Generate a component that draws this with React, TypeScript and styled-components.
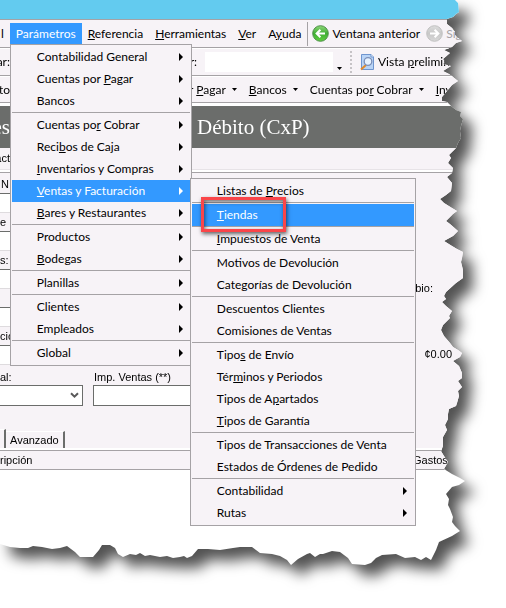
import React from "react";
import styled, { createGlobalStyle, css } from "styled-components";

const color = {
  face: "#f7f3f7",
  line: "#a5a2a5",
  dark: "#6b6d6b",
  title: "#63cbef",
  hot: "#3399ff",
  ink: "#000000",
};

const GlobalStyle = createGlobalStyle`
  * { box-sizing: border-box; }
  body { margin: 0; background: #ffffff; overflow-x: hidden; }
  button, input, select {
    font: inherit;
    color: inherit;
    margin: 0;
    padding: 0;
    border: 0;
    border-radius: 0;
    background: none;
    white-space: nowrap;
  }
  ul { list-style: none; margin: 0; padding: 0; }
`;

/* Torn paper outline. Right edge: [x inset from the right side, y]. */
const rightEdge: [number, number][] = [
  [51, 0], [48, 3], [47, 12], [50, 14], [53, 17], [59, 19], [59, 24], [54, 28], [51, 32], [51, 35],
  [49, 37], [44, 41], [50, 43], [54, 47], [62, 50], [56, 53], [63, 59], [61, 62], [63, 64], [55, 66],
  [63, 71], [57, 74], [53, 77], [48, 81], [54, 85], [59, 91], [64, 97], [64, 101], [59, 102], [55, 106],
  [50, 110], [45, 112], [46, 116], [43, 119], [45, 126], [46, 131], [45, 138], [48, 143], [50, 148], [53, 151],
  [57, 155], [55, 158], [58, 163], [53, 168], [54, 173], [59, 177], [54, 183], [55, 191], [60, 195], [66, 199],
  [62, 203], [54, 208], [49, 211], [53, 214], [60, 221], [56, 224], [48, 231], [53, 236], [62, 241], [54, 246],
  [49, 249], [43, 252], [44, 258], [45, 262], [43, 270], [43, 278], [50, 283], [60, 292], [62, 296], [60, 299],
  [64, 302], [60, 306], [54, 311], [57, 316], [56, 318], [63, 325], [65, 330], [62, 336], [56, 343], [53, 347],
  [48, 350], [44, 353], [46, 357], [53, 361], [47, 366], [44, 373], [44, 378], [48, 381], [46, 384], [44, 387],
  [48, 391], [47, 396], [49, 403], [50, 406], [57, 409], [58, 414], [58, 419], [61, 425], [59, 430], [63, 437],
  [63, 446], [65, 451], [62, 456], [58, 462], [62, 469], [54, 474], [46, 478], [41, 481], [47, 485], [54, 487],
  [60, 494], [57, 499], [58, 505], [56, 509], [53, 517], [54, 522], [51, 526], [46, 531], [54, 536], [67, 542],
  [70, 550], [75, 560],
];

/* Bottom edge, right to left: [x, y inset from the bottom]. */
const bottomEdge: [number, number][] = [
  [426, 51], [421, 48], [415, 51], [405, 50], [396, 54], [382, 53], [376, 50], [371, 45], [365, 43], [352, 44],
  [348, 50], [340, 56], [332, 57], [323, 54], [320, 54], [315, 51], [310, 55], [307, 54], [298, 49], [291, 43],
  [287, 48], [280, 52], [272, 54], [260, 55], [252, 61], [240, 61], [233, 60], [220, 58], [208, 59], [198, 59],
  [192, 52], [187, 50], [184, 52], [180, 51], [173, 50], [167, 52], [160, 51], [150, 53], [145, 52], [140, 55],
  [136, 53], [130, 54], [123, 51], [118, 54], [115, 60], [110, 63], [102, 63], [99, 58], [93, 51], [80, 51],
  [75, 56], [67, 62], [60, 60], [52, 59], [42, 61], [33, 62], [28, 60], [20, 60], [10, 61], [0, 64],
];

const outline = [
  "0 0",
  ...rightEdge.map(([x, y]) => `calc(100% - ${x}px) ${y}px`),
  ...bottomEdge.map(([x, y]) => `${x}px calc(100% - ${y}px)`),
].join(", ");

const Shadow = styled.div`
  filter: drop-shadow(10px 11px 7px rgba(0, 0, 0, 0.68));
`;

const Sheet = styled.div`
  display: flex;
  flex-direction: column;
  min-height: 100vh;
  padding-bottom: 48px;
  overflow: hidden;
  background: #ffffff;
  color: ${color.ink};
  font: 12px/16px Lato, "Noto Sans", sans-serif;
  white-space: nowrap;
  clip-path: polygon(${outline});
`;

const TitleBar = styled.div`
  height: 19px;
  background: ${color.title};
`;

const Bar = styled.div<{ $height: number }>`
  display: flex;
  align-items: center;
  height: ${(p) => p.$height}px;
  background: ${color.face};
  border-top: 1px solid #ffffff;
  border-bottom: 1px solid ${color.line};
`;

const MenuBar = styled(Bar)`
  position: relative;
  z-index: 2;
  border-top-color: ${color.line};
  padding-left: 1px;
`;

const MenuTitle = styled.button<{ $open?: boolean; $cut?: boolean }>`
  display: block;
  height: 21px;
  padding: 0 6px;
  ${(p) => p.$cut && css`padding-left: 0;`}
  ${(p) => p.$open && css`background: ${color.hot}; color: #ffffff;`}
`;

const MenuHost = styled.div`
  position: relative;
`;

const Rule = styled.span`
  width: 1px;
  height: 24px;
  margin: 0 4px 0 0;
  background: ${color.line};
`;

const IconButton = styled.button`
  display: flex;
  align-items: center;
  gap: 3px;
  height: 22px;
  margin-right: 6px;
  &:disabled { color: ${color.line}; }
`;

const Menu = styled.ul<{ $sub?: boolean }>`
  position: absolute;
  z-index: 3;
  top: ${(p) => (p.$sub ? "-2px" : "100%")};
  left: ${(p) => (p.$sub ? "100%" : "0")};
  width: ${(p) => (p.$sub ? 226 : 182)}px;
  padding: 1px;
  border: 1px solid ${color.line};
  background: ${color.face};
  color: ${color.ink};
`;

const MenuRow = styled.li<{ $rule?: boolean }>`
  position: relative;
  ${(p) => p.$rule && css`
    border-top: 1px solid ${color.line};
    padding-top: 1px;
  `}
`;

const MenuItem = styled.button<{ $hot?: boolean }>`
  display: flex;
  align-items: center;
  justify-content: space-between;
  width: 100%;
  height: 22px;
  padding: 0 7px 0 25px;
  ${(p) => p.$hot && css`background: ${color.hot}; color: #ffffff;`}
`;

const Callout = styled.span`
  position: absolute;
  z-index: 1;
  top: -6px;
  left: 9px;
  width: 85px;
  height: 35px;
  border: 3px solid #fa4549;
  box-shadow: 1px 2px 4px rgba(0, 0, 0, 0.6), inset 1px 2px 4px rgba(0, 0, 0, 0.55);
  pointer-events: none;
`;

const LeftPart = styled.div`
  display: flex;
  justify-content: space-between;
  width: 197px;
`;

/* The strip left of the open menu, where the text runs off the window. */
const Overrun = styled.span`
  display: flex;
  justify-content: flex-end;
  width: 10px;
`;

const FindBox = styled.input`
  width: 128px;
  height: 20px;
  margin-left: 8px;
  background: #ffffff;
`;

const DropButton = styled.button`
  display: flex;
  align-items: flex-end;
  height: 20px;
  margin: 0 8px 0 4px;
  padding-bottom: 2px;
`;

const Grip = styled.span`
  width: 2px;
  height: 22px;
  margin-right: 8px;
  background: repeating-linear-gradient(#c6c3c6 0 2px, transparent 2px 4px);
`;

const ToolMenu = styled.button`
  display: flex;
  align-items: center;
  gap: 6px;
  margin-right: 12px;
`;

const Banner = styled.h1`
  display: grid;
  grid-template-columns: 197px 1fr;
  align-items: center;
  height: 45px;
  margin: 0;
  border-top: 3px solid #ffffff;
  background: ${color.dark};
  color: #ffffff;
  font: 21px/24px "Liberation Serif", serif;
`;

const Small = css`
  font: 11px/14px "Liberation Sans", Arial, sans-serif;
`;

const TabStrip = styled.div`
  ${Small}
  height: 25px;
  padding-top: 3px;
  border-bottom: 1px solid ${color.line};
  background: linear-gradient(${color.face} 21px, #e7e3e7 21px 22px, #ffffff 22px);
`;

const Form = styled.form`
  ${Small}
  display: flex;
  justify-content: space-between;
  padding: 2px 0 23px;
  background: ${color.face};
`;

const Fields = styled.div`
  display: flex;
  flex-direction: column;
`;

const Pair = styled.div`
  display: grid;
  grid-template-columns: 83px 150px;
  column-gap: 10px;
`;

const Field = styled.label<{ $boxed?: boolean }>`
  display: flex;
  flex-direction: column;
  height: ${(p) => (p.$boxed ? 41 : 38)}px;
  justify-content: flex-end;
  gap: ${(p) => (p.$boxed ? 1 : 2)}px;
`;

const Box = styled.input<{ $framed?: boolean }>`
  width: 150px;
  height: 20px;
  background: #ffffff;
  border-top: 1px solid ${color.dark};
  border-bottom: 1px solid #dedbde;
  ${(p) => p.$framed && css`border: 1px solid ${color.dark}; height: 21px;`}
`;

const Picker = styled.span`
  display: grid;
  align-items: center;
  > * { grid-area: 1 / 1; }
  > svg { justify-self: end; margin-right: 4px; pointer-events: none; }
`;

const Select = styled.select`
  appearance: none;
  width: 83px;
  height: 21px;
  background: #ffffff;
  border: 1px solid ${color.dark};
  border-left: 0;
`;

const Caption = styled.span`
  padding-left: 1px;
`;

const Totals = styled.div`
  display: flex;
  flex-direction: column;
  align-items: flex-end;
  gap: 52px;
  padding: 106px 54px 0 0;
`;

const Rate = styled.span`
  padding-right: 19px;
`;

const DetailTabs = styled.div`
  ${Small}
  display: flex;
  align-items: flex-end;
  height: 21px;
  background: ${color.face};
  border-bottom: 2px solid #ffffff;
`;

const DetailTab = styled.button<{ $current?: boolean }>`
  height: ${(p) => (p.$current ? 19 : 17)}px;
  padding: 0 ${(p) => (p.$current ? 2 : 4)}px;
  border-top: 1px solid #ffffff;
  border-right: 2px solid ${color.dark};
`;

const Grid = styled.table`
  ${Small}
  width: 100%;
  border-collapse: collapse;
  background: ${color.face};
  th {
    height: 19px;
    padding: 0;
    border: solid ${color.line};
    border-width: 1px 0;
    font-weight: 400;
    text-align: left;
  }
  th:last-child { width: 93px; }
`;

/* "&" marks the letter that is the keyboard mnemonic. */
function Mnemonic({ text }: { text: string }) {
  const at = text.indexOf("&");
  if (at < 0) return <span>{text}</span>;
  return (
    <span>
      {text.slice(0, at)}
      <u>{text[at + 1]}</u>
      {text.slice(at + 2)}
    </span>
  );
}

const SubArrow = () => (
  <svg width="4" height="8" viewBox="0 0 4 8" aria-hidden="true">
    <path d="M0 0L4 4L0 8Z" fill="currentColor" />
  </svg>
);

const DownArrow = () => (
  <svg width="5" height="3" viewBox="0 0 5 3" aria-hidden="true">
    <path d="M0 0H5L2.5 3Z" fill="currentColor" />
  </svg>
);

function RoundArrow({ forward }: { forward?: boolean }) {
  const id = forward ? "orb-forward" : "orb-back";
  return (
    <svg width="17" height="17" viewBox="0 0 17 17" aria-hidden="true">
      <defs>
        <linearGradient id={id} x1="0" y1="0" x2="0" y2="1">
          <stop offset="0" stopColor={forward ? "#dddddd" : "#8fd878"} />
          <stop offset="0.5" stopColor={forward ? "#c8c8c8" : "#3fae34"} />
          <stop offset="1" stopColor={forward ? "#d8d8d8" : "#5fd03f"} />
        </linearGradient>
      </defs>
      <circle cx="8.5" cy="8.5" r="7.8" fill={`url(#${id})`} stroke={forward ? "#c0c0c0" : "#4f8f4a"} />
      <path
        d={forward ? "M4 8.5H12.5M8.6 4.7L12.4 8.5L8.6 12.3" : "M13 8.5H4.5M8.4 4.7L4.6 8.5L8.4 12.3"}
        fill="none"
        stroke="#ffffff"
        strokeWidth="2"
      />
    </svg>
  );
}

const PreviewIcon = () => (
  <svg width="15" height="17" viewBox="0 0 15 17" aria-hidden="true">
    <path d="M1.5 0.5H11L13.5 3V15.5H1.5Z" fill="#b9d4f6" stroke="#6f95cf" />
    <path d="M11 0.5V3H13.5" fill="#ffffff" stroke="#6f95cf" />
    <path d="M6 11L1 15.5" stroke="#e08a2c" strokeWidth="2" />
    <circle cx="8" cy="7.5" r="3.8" fill="#e6f2ff" stroke="#7c8fb8" strokeWidth="1.3" />
  </svg>
);

const Chevron = () => (
  <svg width="9" height="7" viewBox="0 0 9 7" aria-hidden="true">
    <path d="M1 1.2L4.5 4.7L8 1.2" fill="none" stroke="#5a595a" strokeWidth="2" />
  </svg>
);

type Entry = { text: string; rule?: boolean; sub?: boolean; hot?: boolean };

const salesMenu: Entry[] = [
  { text: "Listas de &Precios" },
  { text: "&Tiendas", rule: true, hot: true },
  { text: "&Impuestos de Venta", rule: true },
  { text: "Motivos de Devolución", rule: true },
  { text: "Categorías de Devolución" },
  { text: "Descuentos Clientes", rule: true },
  { text: "Comisiones de Ventas" },
  { text: "Tipo&s de Envío", rule: true },
  { text: "Tér&minos y Periodos" },
  { text: "Tipos de A&partados" },
  { text: "&Tipos de Garantía" },
  { text: "Tipos de Transacciones de Venta", rule: true },
  { text: "Estados de Órdenes de Pedido" },
  { text: "Contabilidad", rule: true, sub: true },
  { text: "Rutas", sub: true },
];

const parameterMenu: Entry[] = [
  { text: "Contabilidad General" },
  { text: "Cuentas por &Pagar" },
  { text: "Bancos" },
  { text: "Cuentas po&r Cobrar", rule: true },
  { text: "Reci&bos de Caja" },
  { text: "&Inventarios y Compras" },
  { text: "&Ventas y Facturación", hot: true },
  { text: "&Bares y Restaurantes" },
  { text: "Productos", rule: true },
  { text: "&Bodegas" },
  { text: "Planillas", rule: true },
  { text: "Clientes", rule: true },
  { text: "Empleados" },
  { text: "Global", rule: true },
];

function SalesMenu() {
  return (
    <Menu $sub role="menu">
      {salesMenu.map((e) => (
        <MenuRow key={e.text} $rule={e.rule} role="none">
          <MenuItem $hot={e.hot} role="menuitem">
            <Mnemonic text={e.text} />
            {e.sub && <SubArrow />}
          </MenuItem>
          {e.hot && <Callout />}
        </MenuRow>
      ))}
    </Menu>
  );
}

function ParameterMenu() {
  return (
    <Menu role="menu">
      {parameterMenu.map((e) => (
        <MenuRow key={e.text} $rule={e.rule} role="none">
          <MenuItem $hot={e.hot} role="menuitem" aria-haspopup="menu">
            <Mnemonic text={e.text} />
            <SubArrow />
          </MenuItem>
          {e.hot && <SalesMenu />}
        </MenuRow>
      ))}
    </Menu>
  );
}

export default function App() {
  return (
    <>
      <GlobalStyle />
      <Shadow>
        <Sheet>
          <TitleBar />
          <MenuBar $height={29}>
            <MenuTitle $cut>l</MenuTitle>
            <MenuHost>
              <MenuTitle $open>Parámetros</MenuTitle>
              <ParameterMenu />
            </MenuHost>
            <MenuTitle><Mnemonic text="&Referencia" /></MenuTitle>
            <MenuTitle><Mnemonic text="&Herramientas" /></MenuTitle>
            <MenuTitle><Mnemonic text="&Ver" /></MenuTitle>
            <MenuTitle><Mnemonic text="A&yuda" /></MenuTitle>
            <Rule />
            <IconButton><RoundArrow />Ventana anterior</IconButton>
            <IconButton disabled><RoundArrow forward />Siguiente</IconButton>
          </MenuBar>
          <Bar $height={28}>
            <LeftPart>
              <Overrun>ar:</Overrun>
              <label htmlFor="find">r:</label>
            </LeftPart>
            <FindBox id="find" />
            <DropButton aria-label="Abrir lista"><DownArrow /></DropButton>
            <Grip />
            <IconButton><PreviewIcon /><Mnemonic text="Vista &preliminar" /></IconButton>
          </Bar>
          <Bar $height={27}>
            <LeftPart>
              <Overrun>tto</Overrun>
              <span>r&nbsp;</span>
            </LeftPart>
            <ToolMenu><Mnemonic text="&Pagar" /><DownArrow /></ToolMenu>
            <ToolMenu><Mnemonic text="&Bancos" /><DownArrow /></ToolMenu>
            <ToolMenu><Mnemonic text="Cuentas po&r Cobrar" /><DownArrow /></ToolMenu>
            <ToolMenu><Mnemonic text="&Inventarios" /></ToolMenu>
          </Bar>
          <Banner>
            <Overrun>es</Overrun>
            <span>Débito (CxP)</span>
          </Banner>
          <TabStrip><Overrun>act</Overrun></TabStrip>
          <Form>
            <Fields>
              <Field><Caption>N</Caption><Box /></Field>
              <Field>e<Box /></Field>
              <Field>s:<Box /></Field>
              <Field><Box aria-label="Detalle" /></Field>
              <Field>ció<Box /></Field>
              <Pair>
                <Field $boxed>
                  al:
                  <Picker>
                    <Select />
                    <Chevron />
                  </Picker>
                </Field>
                <Field $boxed>
                  <Caption>Imp. Ventas (**)</Caption>
                  <Box $framed />
                </Field>
              </Pair>
            </Fields>
            <Totals>
              <Rate>bio:</Rate>
              <span>¢0.00</span>
            </Totals>
          </Form>
          <DetailTabs>
            <DetailTab $current aria-label="Detalle" />
            <DetailTab>Avanzado</DetailTab>
          </DetailTabs>
          <Grid>
            <thead>
              <tr>
                <th>ripción</th>
                <th>Gastos.</th>
              </tr>
            </thead>
          </Grid>
        </Sheet>
      </Shadow>
    </>
  );
}
